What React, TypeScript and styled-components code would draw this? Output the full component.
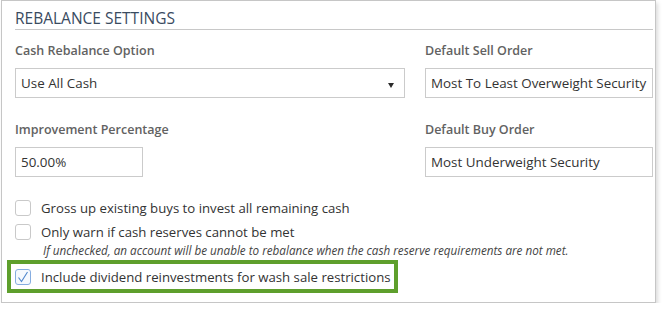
import React from "react";
import styled, { createGlobalStyle } from "styled-components";

const Global = createGlobalStyle`
  html, body { margin: 0; padding: 0; background: #fff; }
  body { font-family: "Open Sans", "Noto Sans", sans-serif; color: #333; }
  * { box-sizing: border-box; }
`;

const Panel = styled.div`
  margin-left: 1px;
  width: 655px;
  height: 303px;
  border: 1px solid #c6c6c6;
  background: #fff;
  box-shadow: 2px 3px 4px rgba(0, 0, 0, 0.14);
  padding: 7px 2px 0 13px;
  display: flex;
  flex-direction: column;
`;

const Heading = styled.h2`
  margin: 0;
  font-size: 15.5px;
  font-weight: 400;
  line-height: 21px;
  color: #3a4b5f;
  letter-spacing: 0;
  border-bottom: 1px solid #c8c8c8;
`;

const FieldGrid = styled.div`
  display: grid;
  grid-template-columns: 390px 228px;
  column-gap: 20px;
  row-gap: 23px;
  margin-top: 12px;
`;

const Field = styled.div`
  display: flex;
  flex-direction: column;
  gap: 8px;
`;

const Label = styled.label`
  font-size: 12.5px;
  font-weight: 600;
  line-height: 18px;
  color: #626262;
`;

const Box = styled.div<{ $width?: string }>`
  position: relative;
  width: ${(p) => p.$width ?? "100%"};
  height: 30px;
  border: 1px solid #cbcbcb;
  background: #fff;
  padding: 0 5px;
  display: flex;
  align-items: center;
  font-size: 13.4px;
  color: #333;
  white-space: nowrap;
  overflow: hidden;
`;

const Arrow = styled.span`
  position: absolute;
  right: 10px;
  top: 14px;
  width: 0;
  height: 0;
  border-left: 3.5px solid transparent;
  border-right: 3.5px solid transparent;
  border-top: 5px solid #2b2b2b;
`;

const Options = styled.div`
  margin-top: 18px;
  display: flex;
  flex-direction: column;
`;

const CheckRow = styled.div<{ $h: number }>`
  display: flex;
  align-items: center;
  gap: 10px;
  height: ${(p) => p.$h}px;
  font-size: 13.2px;
  color: #333;
  white-space: nowrap;
`;

const CheckBox = styled.span<{ $checked?: boolean }>`
  width: 16px;
  height: 16px;
  flex: none;
  border: 1px solid ${(p) => (p.$checked ? "#86ade0" : "#c9c9c9")};
  border-radius: 3px;
  background: ${(p) => (p.$checked ? "#f5f9fe" : "#fff")};
  display: flex;
  align-items: center;
  justify-content: center;
`;

const Note = styled.div`
  padding-left: 28px;
  font-size: 11.7px;
  font-style: italic;
  line-height: 14px;
  color: #444;
  white-space: nowrap;
`;

const Highlight = styled.div`
  align-self: flex-start;
  margin: 3px 0 0 -8px;
  border: 4px solid #5e9f2c;
  padding: 0 3px 0 4px;
`;

const Check = () => (
  <svg width="12" height="12" viewBox="0 0 12 12">
    <path d="M1.5 6.5 L4.5 10.5 L10.5 1" fill="none" stroke="#4f86cc" strokeWidth="1.1" />
  </svg>
);

export default function App() {
  return (
    <>
      <Global />
      <Panel>
        <Heading>REBALANCE SETTINGS</Heading>
        <FieldGrid>
          <Field>
            <Label>Cash Rebalance Option</Label>
            <Box>
              Use All Cash
              <Arrow />
            </Box>
          </Field>
          <Field>
            <Label>Default Sell Order</Label>
            <Box>Most To Least Overweight Security</Box>
          </Field>
          <Field>
            <Label>Improvement Percentage</Label>
            <Box $width="128px">50.00%</Box>
          </Field>
          <Field>
            <Label>Default Buy Order</Label>
            <Box>Most Underweight Security</Box>
          </Field>
        </FieldGrid>
        <Options>
          <CheckRow $h={26}>
            <CheckBox />
            Gross up existing buys to invest all remaining cash
          </CheckRow>
          <CheckRow $h={22}>
            <CheckBox />
            Only warn if cash reserves cannot be met
          </CheckRow>
          <Note>
            If unchecked, an account will be unable to rebalance when the cash reserve requirements are not met.
          </Note>
          <Highlight>
            <CheckRow $h={25}>
              <CheckBox $checked>
                <Check />
              </CheckBox>
              Include dividend reinvestments for wash sale restrictions
            </CheckRow>
          </Highlight>
        </Options>
      </Panel>
    </>
  );
}
